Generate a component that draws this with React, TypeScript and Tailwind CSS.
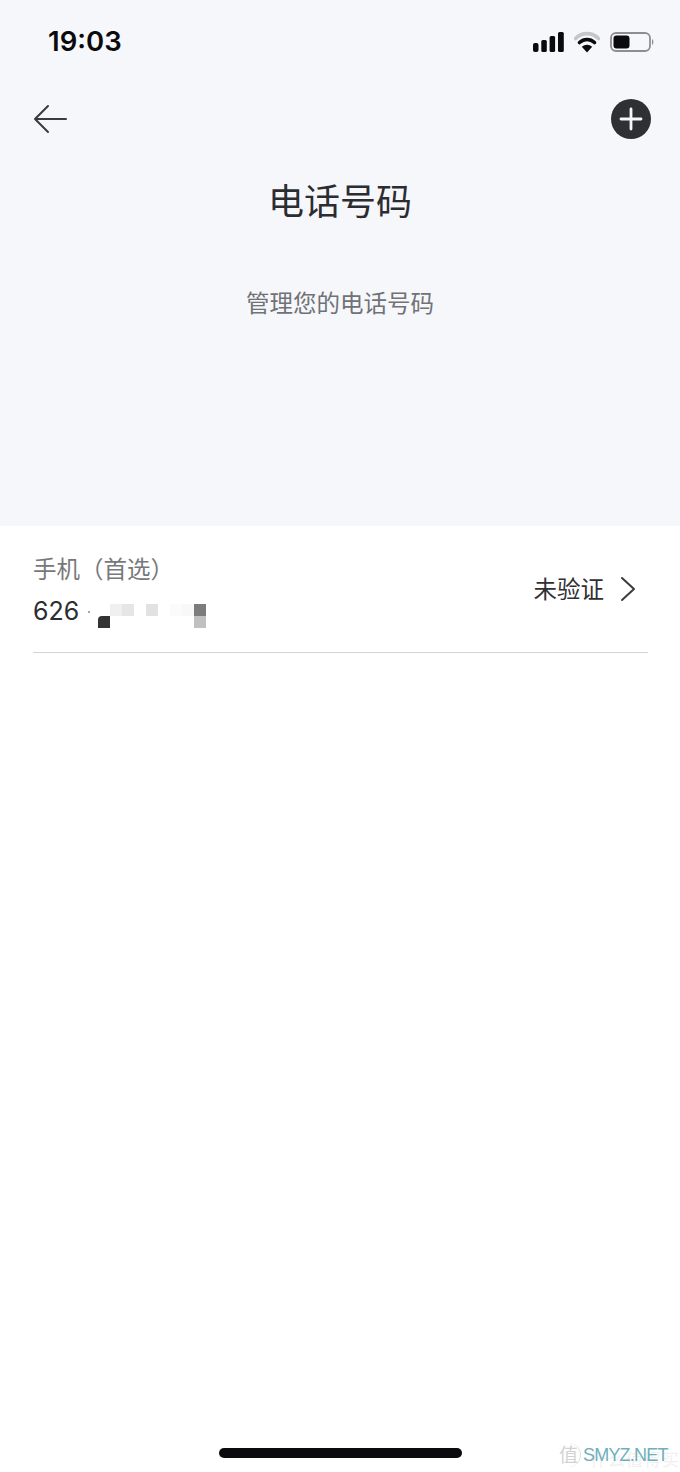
const sans = "font-['Inter','Noto_Sans_CJK_SC',sans-serif]";

function StatusBar() {
  return (
    <div className="flex h-[84px] items-center justify-between pl-[48px] pr-[26px]">
      <span className="text-[27.500px] font-semibold leading-none text-[#0b0b0d]">19:03</span>
      <div className="flex items-center gap-[10px]">
        <svg width="31" height="20" viewBox="0 0 31 20" fill="#0b0b0d">
          <rect x="0" y="11" width="5.500" height="9" rx="2" />
          <rect x="8.300" y="8" width="5.500" height="12" rx="1.500" />
          <rect x="16.600" y="4" width="5.500" height="16" rx="1.500" />
          <rect x="25" y="0" width="5.800" height="20" rx="1.500" />
        </svg>
        <svg width="26" height="22" viewBox="0 0 26 22" fill="none">
          <path d="M1.500 7.500C8 1 18 1 24.500 7.500" stroke="#c6c6c8" strokeWidth="3.600" strokeLinecap="round" />
          <path d="M5.500 11.500C10 7.500 16 7.500 20.500 11.500" stroke="#0b0b0d" strokeWidth="3.600" strokeLinecap="round" />
          <path d="M13 21.500L7.800 15.800C11 13 15 13 18.200 15.800Z" fill="#0b0b0d" />
        </svg>
        <svg width="44" height="20" viewBox="0 0 44 20" fill="none">
          <rect x="1" y="1" width="39" height="18" rx="5" stroke="#8e8e90" strokeWidth="1.800" fill="none" />
          <rect x="3.500" y="3.500" width="16" height="13" rx="3" fill="#0b0b0d" />
          <path d="M42 7C43.800 7.500 43.800 12.500 42 13Z" fill="#8e8e90" />
        </svg>
      </div>
    </div>
  );
}

export default function App() {
  return (
    <div className={`relative flex h-[1472px] w-[680px] flex-col overflow-hidden bg-white ${sans}`}>
      <div className="h-[526px] bg-[#f6f7fb]">
        <StatusBar />
        <div className="flex items-center justify-between pl-[33px] pr-[29px] pt-[15px]">
          <svg width="35" height="30" viewBox="0 0 35 30" fill="none" stroke="#3a3b3e" strokeWidth="2" strokeLinecap="round" strokeLinejoin="round">
            <path d="M33 15H3" />
            <path d="M15 2L2 15L15 28" />
          </svg>
          <div className="flex h-[40px] w-[40px] items-center justify-center rounded-full bg-[#2f3033]">
            <svg width="24" height="24" viewBox="0 0 24 24" stroke="#f6f7fb" strokeWidth="2.800" strokeLinecap="round">
              <path d="M12 2V22M2 12H22" />
            </svg>
          </div>
        </div>
        <h1 className="mt-[40px] text-center text-[36px] font-normal leading-[46px] text-[#2c2d30]">电话号码</h1>
        <p className="mt-[63px] text-center text-[23.500px] leading-[32px] text-[#707276]">管理您的电话号码</p>
      </div>

      <div className="ml-[33px] mr-[32px] flex h-[127px] items-center justify-between border-b border-[#d4d4d6]">
        <div className="self-start pt-[28px]">
          <div className="text-[23.500px] leading-[32px] text-[#77787b]">手机（首选）</div>
          <div className="mt-[7px] flex h-[38px] items-center">
            <span className="mb-[2px] text-[25px] leading-none text-[#2c2d30]">626</span>
            <span className="ml-[9px] mr-[8px] h-[2px] w-[2px] rounded-full bg-[#888888]" />
            <div className="mt-[8px] grid grid-cols-[repeat(9,12px)] grid-rows-[12px_12px]">
              <span className="col-start-2 row-start-1 bg-[#f0f0f0]" />
              <span className="col-start-3 row-start-1 bg-[#e6e6e6]" />
              <span className="col-start-5 row-start-1 bg-[#e2e2e2]" />
              <span className="col-start-7 row-start-1 bg-[#fbfbfb]" />
              <span className="col-start-8 row-start-1 bg-[#f8f8f8]" />
              <span className="col-start-9 row-start-1 bg-[#7c7c7c]" />
              <span className="col-start-9 row-start-2 bg-[#c0c0c0]" />
              <span className="col-start-1 row-start-2 rounded-tl-[4px] bg-[#333333]" />
            </div>
          </div>
        </div>
        <div className="flex items-center gap-[16px] pr-[12px]">
          <span className="mt-[2px] text-[23.500px] leading-[32px] text-[#2f3033]">未验证</span>
          <svg width="16" height="26" viewBox="0 0 16 26" fill="none" stroke="#3a3b3e" strokeWidth="2" strokeLinecap="round" strokeLinejoin="round">
            <path d="M2 2L14 13L2 24" />
          </svg>
        </div>
      </div>

      <div className="absolute bottom-[14px] left-[219px] h-[10px] w-[243px] rounded-full bg-[#0b0b0d]" />
      <span className="absolute bottom-[3px] right-0 text-[17px] leading-none tracking-[1px] text-[#e6e6e6]/60">什么值得买</span>
      <div className="absolute bottom-[5px] left-[557px] flex h-[24px] w-[112px] items-center">
        <span className="flex h-[24px] w-[24px] items-center justify-center rounded-full border-r border-[#dddddd] text-[19px] leading-none text-[#d2d2d2]">值</span>
        <span className="ml-[2px] font-['Liberation_Sans',sans-serif] text-[18px] leading-none tracking-[-0.8px] text-[#6fb0bb]">SMYZ.NET</span>
      </div>
    </div>
  );
}
